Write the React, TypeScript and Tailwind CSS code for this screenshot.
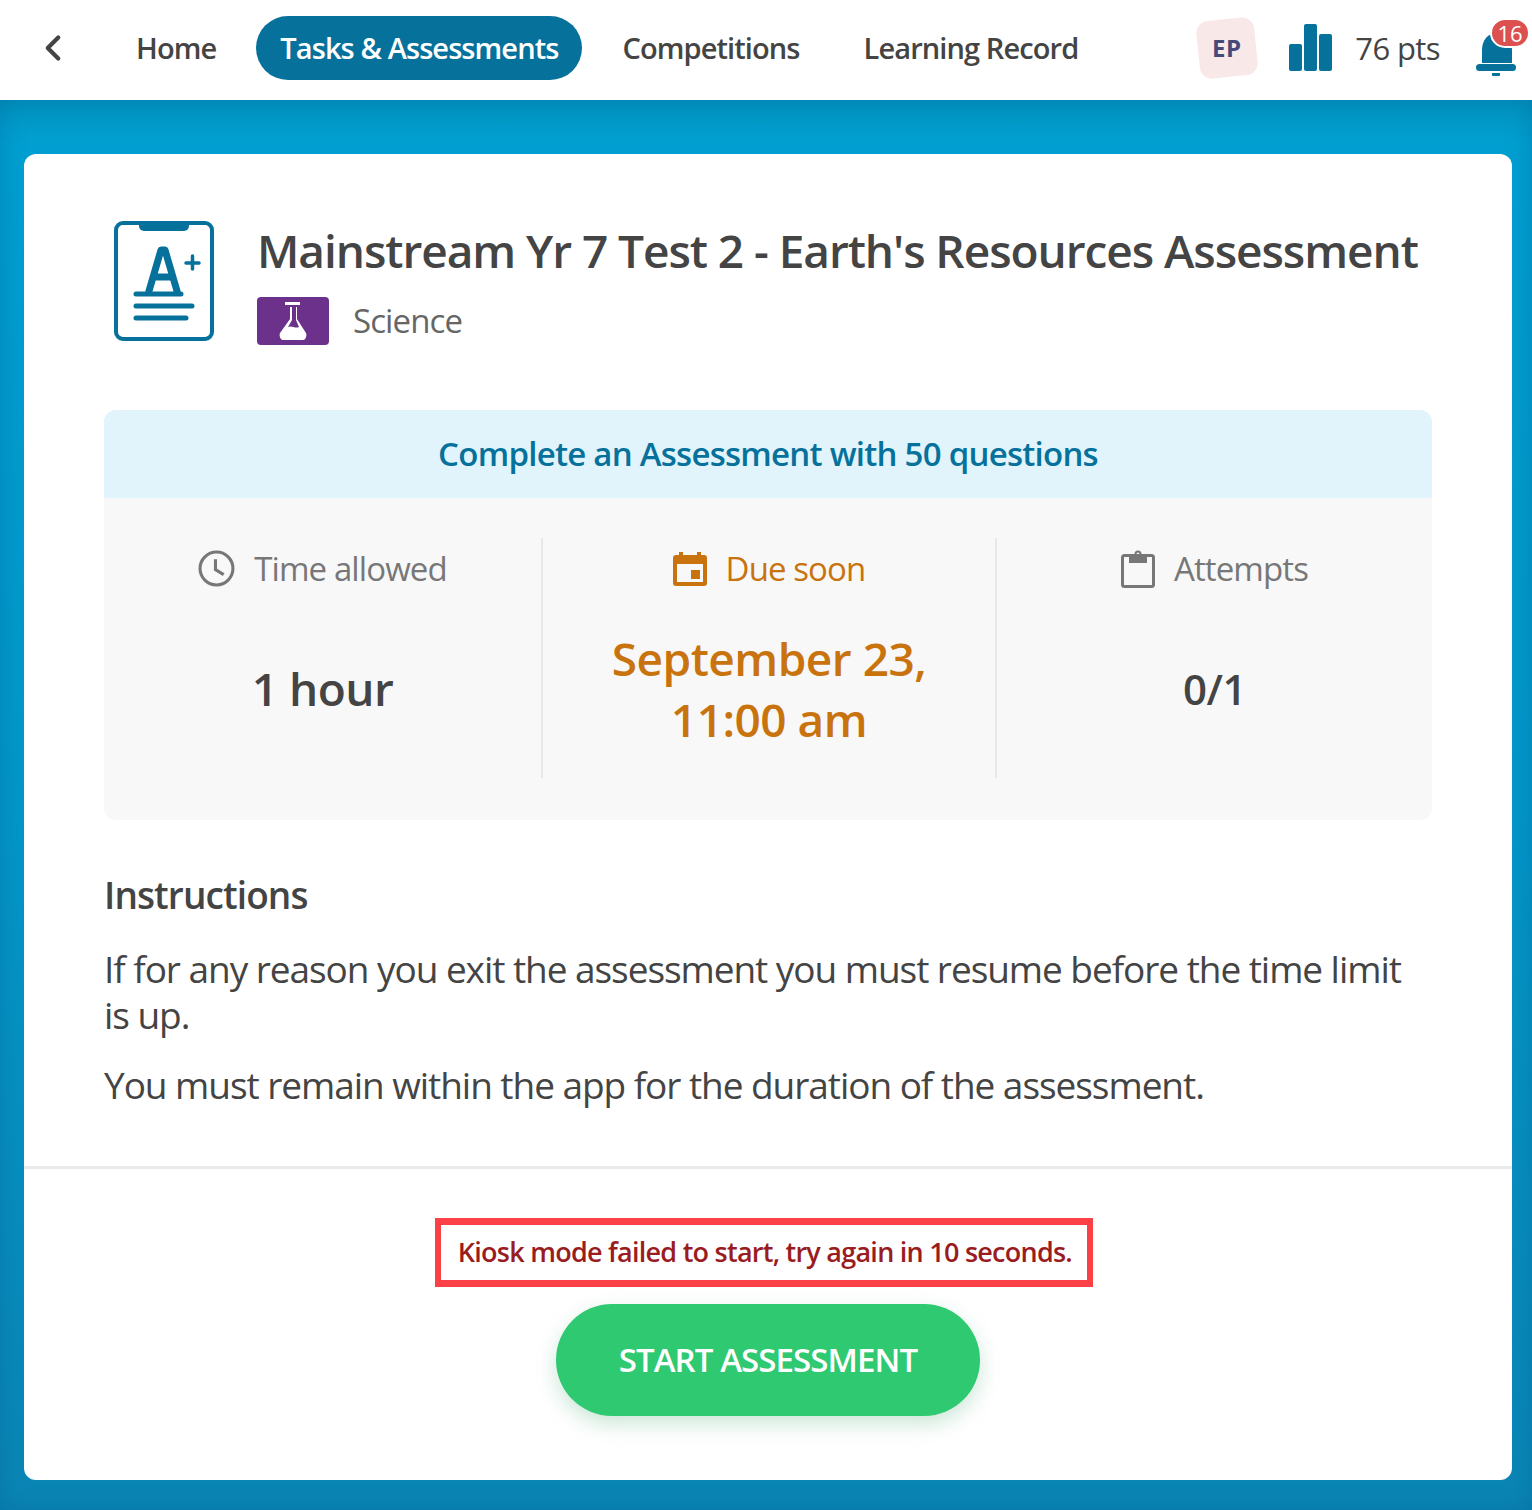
import React from 'react';
import { ChevronLeft } from 'lucide-react';

function NavItem({ label, active }: { label: string; active?: boolean }) {
  return (
    <div
      className={`flex h-16 items-center rounded-full text-[29px] font-semibold tracking-[-0.9px] whitespace-nowrap ${
        active ? 'bg-[#06719b] px-6 text-white' : 'text-[#444444]'
      }`}
    >
      {label}
    </div>
  );
}

function StatColumn({
  icon,
  label,
  tone,
  children,
  width,
}: {
  icon: React.ReactNode;
  label: string;
  tone: string;
  children: React.ReactNode;
  width: string;
}) {
  return (
    <div className={`flex flex-col items-center ${width}`}>
      <div className={`flex h-[62px] items-center gap-[19px] text-[33px] tracking-[-0.9px] ${tone}`}>
        {icon}
        <span>{label}</span>
      </div>
      <div className="flex flex-1 items-center justify-center">{children}</div>
    </div>
  );
}

export default function App() {
  return (
    <div className="flex h-[1510px] w-[1532px] flex-col font-['Open_Sans',sans-serif] text-[#444444]">
      {/* top nav */}
      <header className="flex h-[100px] shrink-0 items-center bg-white pb-[4px]">
        <ChevronLeft className="ml-[32px] h-[42px] w-[42px] text-[#444444]" strokeWidth={2.4} />
        <div className="ml-[62px] flex items-center">
          <NavItem label="Home" />
          <div className="ml-[40px]">
            <NavItem label="Tasks & Assessments" active />
          </div>
          <div className="ml-[40px]">
            <NavItem label="Competitions" />
          </div>
          <div className="ml-[64px]">
            <NavItem label="Learning Record" />
          </div>
        </div>
        <div className="ml-auto flex items-center">
          <div className="flex h-[58px] w-[58px] -rotate-6 items-center justify-center rounded-[12px] bg-[#f9e8e8] text-[24px] font-bold tracking-[0.5px] text-[#47497a]">
            <span className="rotate-6">EP</span>
          </div>
          <svg className="ml-[33px] h-[48px] w-[44px]" viewBox="0 0 44 48" fill="#06719b">
            <rect x="0" y="20" width="13" height="27" rx="2" />
            <rect x="15" y="0" width="13" height="47" rx="2" />
            <rect x="30" y="10" width="13" height="37" rx="2" />
          </svg>
          <span className="ml-[22px] text-[31px] tracking-[-0.6px]">76 pts</span>
          <div className="relative ml-[36px] mr-[14px] h-[60px] w-[42px]">
            <svg className="absolute left-0 top-[12px] h-[46px] w-[42px]" viewBox="0 0 42 46" fill="#06719b">
              <path d="M6 33V20C6 10 12 3 21 3s15 7 15 17v13z" />
              <rect x="0" y="34" width="40" height="7" rx="3.5" />
              <path d="M16 43h8v1a4 4 0 0 1-8 0z" />
            </svg>
            <div className="absolute left-[14px] top-0 flex h-[30px] w-[40px] items-center justify-center rounded-full border-2 border-white bg-[#dc5050] text-[22px] text-white">
              16
            </div>
          </div>
        </div>
      </header>

      {/* page body */}
      <main className="flex-1 bg-[#0299ca] bg-[linear-gradient(180deg,#0293bf_0%,#019fd1_3%,#0397c9_50%,#0a85b4_100%)] px-[20px] pb-[30px] pl-[24px] pt-[54px] shadow-[inset_0_0_24px_rgba(4,90,140,0.35)]">
        <section className="flex h-[1326px] flex-col rounded-[12px] bg-white">
          <div className="flex-1 px-[80px]">
            <div className="flex pl-[10px] pt-[67px]">
              {/* assessment icon */}
              <svg className="h-[120px] w-[100px] shrink-0" viewBox="0 0 100 120" fill="none" stroke="#06719b">
                <rect x="2" y="2" width="96" height="116" rx="7" strokeWidth="4" />
                <path d="M25 2h50v3a5 5 0 0 1-5 5H30a5 5 0 0 1-5-5z" fill="#06719b" stroke="none" />
                <path d="M35 70L47 29h4l12 41M40 56h18" strokeWidth="7" strokeLinecap="round" strokeLinejoin="round" />
                <path d="M72 42h13M78.5 35v13" strokeWidth="3.5" strokeLinecap="round" />
                <path d="M22 73h45M22 85h56M22 97h50" strokeWidth="5" strokeLinecap="round" />
              </svg>
              <div className="ml-[43px]">
                <h1 className="mt-[-2px] text-[46px] leading-[62px] font-semibold tracking-[-1.05px] whitespace-nowrap">
                  Mainstream Yr 7 Test 2 - Earth's Resources Assessment
                </h1>
                <div className="mt-[15px] flex items-center">
                  <div className="flex h-[48px] w-[72px] items-center justify-center rounded-[4px] bg-[#6b318b]">
                    <svg className="h-[40px] w-[32px]" viewBox="0 0 32 40" fill="white">
                      <rect x="8" y="1" width="15" height="3" />
                      <path d="M11 6h2v12L3 32c-1 2 0 7 3 7h20c3 0 4-5 3-7L20 18V6h2-11zm4 0v13l-4 7c4-2 7 2 11 0l-3-7V6z" fillRule="evenodd" />
                    </svg>
                  </div>
                  <span className="ml-[24px] text-[33px] tracking-[-0.9px] text-[#666666]">Science</span>
                </div>
              </div>
            </div>

            {/* summary panel */}
            <div className="mt-[64px] overflow-hidden rounded-[12px] bg-[#f8f8f8]">
              <div className="flex h-[88px] items-center justify-center bg-[#e1f4fb] text-[33px] font-semibold tracking-[-0.75px] text-[#06719b]">
                Complete an Assessment with 50 questions
              </div>
              <div className="flex h-[322px] pt-[40px] pb-[42px]">
                <StatColumn
                  width="w-[437px]"
                  tone="text-[#777777]"
                  label="Time allowed"
                  icon={
                    <svg className="h-[37px] w-[37px]" viewBox="0 0 36 36" fill="none" stroke="#777777" strokeWidth="3">
                      <circle cx="18" cy="18" r="16" />
                      <path d="M17 9v10l8 5" />
                    </svg>
                  }
                >
                  <span className="text-[46px] font-semibold tracking-[-0.5px]">1 hour</span>
                </StatColumn>
                <div className="w-[2px] bg-[#e8e8e8]" />
                <StatColumn
                  width="w-[452px]"
                  tone="text-[#c9730f]"
                  label="Due soon"
                  icon={
                    <svg className="h-[34px] w-[34px]" viewBox="0 0 34 34" fill="#c9730f">
                      <path
                        fillRule="evenodd"
                        d="M6 0h4v3h14V0h4v3h3a3 3 0 0 1 3 3v25a3 3 0 0 1-3 3H3a3 3 0 0 1-3-3V6a3 3 0 0 1 3-3h3zM4 12v18h26V12z"
                      />
                      <rect x="18" y="18" width="9" height="9" />
                    </svg>
                  }
                >
                  <span className="text-center text-[46px] leading-[61px] font-semibold tracking-[-0.5px] text-[#c9730f]">
                    September 23,
                    <br />
                    11:00 am
                  </span>
                </StatColumn>
                <div className="w-[2px] bg-[#e8e8e8]" />
                <StatColumn
                  width="w-[435px]"
                  tone="text-[#777777]"
                  label="Attempts"
                  icon={
                    <svg className="h-[38px] w-[34px]" viewBox="0 0 34 38" fill="none">
                      <rect x="1.5" y="5.5" width="31" height="31" rx="2" stroke="#777777" strokeWidth="3" />
                      <path
                        fillRule="evenodd"
                        fill="#777777"
                        d="M8 4h5.5a3.5 3.5 0 0 1 7 0H26v9H8zM17 2.5a1.5 1.5 0 1 0 0 3 1.5 1.5 0 0 0 0-3z"
                      />
                    </svg>
                  }
                >
                  <span className="text-[42px] font-semibold tracking-[-0.5px]">0/1</span>
                </StatColumn>
              </div>
            </div>

            {/* instructions */}
            <h2 className="mt-[50px] text-[37px] leading-[50px] font-semibold tracking-[-0.9px]">Instructions</h2>
            <p className="mt-[26px] text-[37px] leading-[46px] tracking-[-1.05px]">
              If for any reason you exit the assessment you must resume before the time limit is up.
            </p>
            <p className="mt-[24px] text-[37px] leading-[46px] tracking-[-1.05px]">
              You must remain within the app for the duration of the assessment.
            </p>
          </div>

          <div className="flex h-[314px] shrink-0 flex-col items-center border-t-[3px] border-[#e8e9eb] pt-[49px]">
            <div className="ml-[-8px] flex h-[69px] w-[658px] items-center justify-end border-x-[6px] border-y-[7px] border-[#fc4146] pr-[15px] text-[27px] font-semibold tracking-[-0.75px] text-[#9b1c1f]">
              Kiosk mode failed to start, try again in 10 seconds.
            </div>
            <button className="mt-[17px] flex h-[112px] w-[424px] items-center justify-center rounded-full bg-[#2ec971] text-[33px] font-semibold tracking-[-0.9px] text-white shadow-[0_8px_20px_rgba(46,160,100,0.25)]">
              START ASSESSMENT
            </button>
          </div>
        </section>
      </main>
    </div>
  );
}
